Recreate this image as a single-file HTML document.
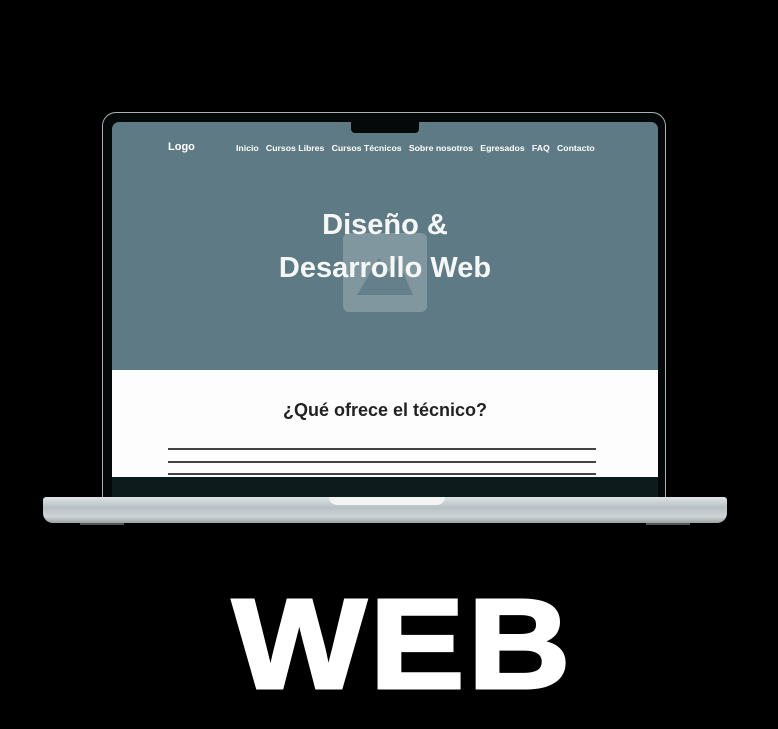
<!DOCTYPE html>
<html><head><style>
body{margin:0;width:778px;height:729px;background:#000;position:relative;overflow:hidden;font-family:"Liberation Sans",sans-serif}
.a{position:absolute}
</style></head><body>
<div class="a" style="left:102px;top:112px;width:564px;height:390px;border:1.5px solid #aab2b4;border-radius:14px 14px 0 0;background:#050808;box-sizing:border-box"></div>
<div class="a" style="left:112px;top:122px;width:546px;height:248px;background:#5e7a84;border-radius:7px 7px 0 0"></div>
<div class="a" style="left:112px;top:370px;width:546px;height:107px;background:#fdfdfd"></div>
<div class="a" style="left:112px;top:477px;width:546px;height:20px;background:#0e1b1d"></div>
<div class="a" style="left:351px;top:122px;width:68px;height:11px;background:#060909;border-radius:0 0 4px 4px"></div>
<div class="a" style="left:168px;top:141px;color:#fff;font-weight:bold;font-size:11px">Logo</div>
<div class="a" style="left:236px;top:143px;color:#fff;font-size:8.7px;font-weight:bold;white-space:nowrap">Inicio&nbsp;&nbsp; Cursos Libres&nbsp;&nbsp; Cursos Técnicos&nbsp;&nbsp; Sobre nosotros&nbsp;&nbsp; Egresados&nbsp;&nbsp; FAQ&nbsp;&nbsp; Contacto</div>
<div class="a" style="left:343px;top:233px;width:84px;height:79px;background:rgba(255,255,255,0.22);border-radius:6px"></div>
<svg class="a" style="left:343px;top:233px" width="84" height="79"><polygon points="14,62 36,25 46,40 54,25 70,62" fill="#5e7a84" opacity="0.8"/></svg>
<div class="a" style="left:235px;top:204px;width:300px;text-align:center;color:#f5f7f7;font-weight:bold;font-size:29px;line-height:43px">Diseño &amp;<br>Desarrollo Web</div>
<div class="a" style="left:235px;top:400px;width:300px;text-align:center;color:#222;font-weight:bold;font-size:18px">¿Qué ofrece el técnico?</div>
<div class="a" style="left:168px;top:448px;width:428px;height:2px;background:#444"></div>
<div class="a" style="left:168px;top:461px;width:428px;height:2px;background:#444"></div>
<div class="a" style="left:168px;top:473px;width:428px;height:2px;background:#444"></div>
<div class="a" style="left:43px;top:497px;width:684px;height:26px;border-radius:3px 3px 10px 10px;background:linear-gradient(#dfe4e6,#b8c0c3 40%,#cfd5d7 75%,#9aa2a5)"></div>
<div class="a" style="left:329px;top:497px;width:116px;height:8px;background:#f2f4f4;border-radius:0 0 8px 8px"></div>
<div class="a" style="left:80px;top:523px;width:44px;height:2px;background:#555"></div>
<div class="a" style="left:646px;top:523px;width:44px;height:2px;background:#555"></div>
<div class="a" style="left:14px;top:575px;width:778px;text-align:center;color:#fff;font-weight:bold;font-size:128px;line-height:140px;letter-spacing:3px;transform:scaleX(1.11);-webkit-text-stroke:3px #fff">WEB</div>
</body></html>
